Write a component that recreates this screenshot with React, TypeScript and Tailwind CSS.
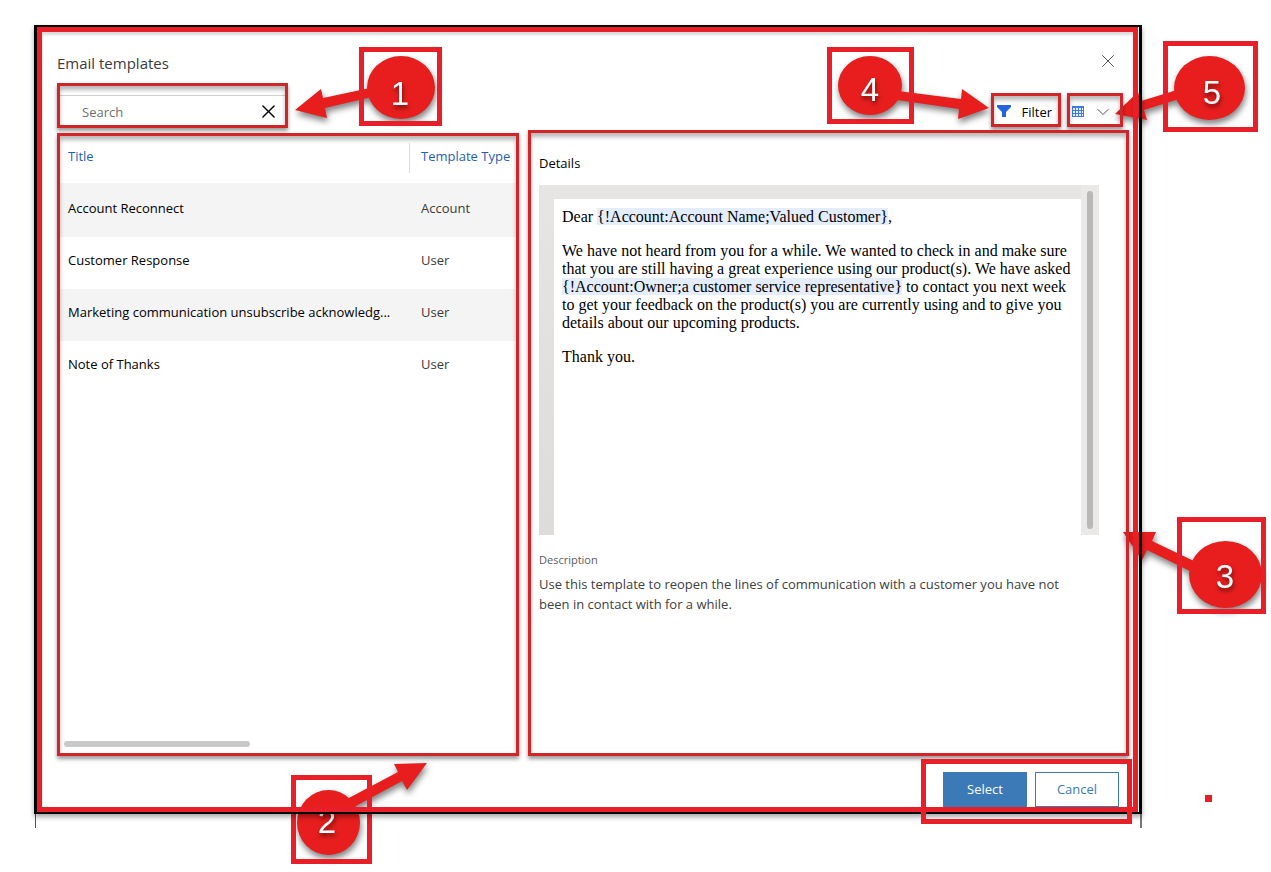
import React, { useState } from 'react';
import { ChevronDown, X } from 'lucide-react';

type Template = {
  title: string;
  type: string;
};

type CalloutProps = {
  label: string;
  frame: [number, number, number, number];
  circle: [number, number, number, number];
  arrow: string;
  text: [number, number];
};

const templates: Template[] = [
  { title: 'Account Reconnect', type: 'Account' },
  { title: 'Customer Response', type: 'User' },
  { title: 'Marketing communication unsubscribe acknowledg...', type: 'User' },
  { title: 'Note of Thanks', type: 'User' },
];

// numbered red bubble with its box and arrow
function Callout({ label, frame, circle, arrow, text }: CalloutProps) {
  const [x, y, w, h] = frame;
  const [cx, cy, rx, ry] = circle;

  return (
    <g>
      <g className="drop-shadow-[1px_4px_3px_rgba(0,0,0,0.5)]">
        <polygon points={arrow} fill="#e81e1e" />
        <ellipse cx={cx} cy={cy} rx={rx} ry={ry} fill="#e81e1e" />
      </g>
      <rect x={x + 2.5} y={y + 2.5} width={w - 5} height={h - 5} fill="none" stroke="#e81e28" strokeWidth="5" />
      <text
        x={text[0]}
        y={text[1]}
        textAnchor="middle"
        fill="#fff"
        className="font-['Liberation_Sans',sans-serif] text-[33px] drop-shadow-[1px_3px_2px_rgba(0,0,0,0.5)]"
      >
        {label}
      </text>
    </g>
  );
}

// thin red outline drawn over a part of the dialog
function Highlight() {
  return (
    <span className="pointer-events-none absolute inset-0 border-3 border-[#d3242a] shadow-[0_3px_4px_rgba(0,0,0,0.4),inset_0_4px_4px_rgba(0,0,0,0.28)]" />
  );
}

function GridIcon() {
  return (
    <svg width="12" height="11" viewBox="0 0 12 11" shapeRendering="crispEdges">
      <rect width="12" height="11" fill="#3f7ce0" />
      <path
        fill="#e6effd"
        d="M1 2h2v2H1zM4 2h2v2H4zM7 2h2v2H7zM10 2h1v2h-1zM1 5h2v2H1zM4 5h2v2H4zM7 5h2v2H7zM10 5h1v2h-1zM1 8h2v2H1zM4 8h2v2H4zM7 8h2v2H7zM10 8h1v2h-1z"
      />
    </svg>
  );
}

function TemplateList() {
  return (
    <section className="relative mt-[3px] flex min-w-0 flex-col justify-between p-[3px]">
      <table className="w-full table-fixed text-left text-[13px]">
        <thead>
          <tr className="h-[47px] align-top text-[#1f5fae]">
            <th className="w-[349px] px-2 pt-[10px] font-normal leading-5">Title</th>
            <th className="pt-[7px] font-normal">
              <div className="h-[30px] whitespace-nowrap border-l border-[#dcdcdc] pl-[11px] pt-[3px] leading-5">
                Template Type
              </div>
            </th>
          </tr>
          <tr className="h-0.5 bg-[#f4f4f4]">
            <td colSpan={2} />
          </tr>
        </thead>
        <tbody>
          {templates.map((template) => (
            <tr key={template.title} className="h-[52px] odd:bg-[#f4f4f4] align-top leading-5">
              <td className="truncate px-2 pt-[13px] font-medium text-black">{template.title}</td>
              <td className="pl-3 pt-[13px] text-[#3b3b3b]">{template.type}</td>
            </tr>
          ))}
        </tbody>
      </table>
      <div className="mb-[6px] ml-1 h-[6px] w-[186px] rounded-full bg-[#c9c9c9]" />
      <Highlight />
    </section>
  );
}

function TemplateDetails() {
  return (
    <section className="relative py-[3px] pl-[11px] pr-[30px]">
      <h2 className="h-[52px] pt-5 text-[13px] font-medium leading-5 text-black">Details</h2>
      <div className="flex h-[350px] bg-linear-to-b from-[#e6e5e4] to-[#dddcdb] pl-[15px]">
        <div className="mt-[14px] flex-1 bg-white px-2 pt-[9px] font-['Liberation_Serif',serif] text-[16px] leading-[18px] text-black">
          <p className="mb-4">
            Dear <span className="bg-[#e4edfc]">{'{!Account:Account Name;Valued Customer}'}</span>,
          </p>
          <p className="mb-4">
            We have not heard from you for a while. We wanted to check in and make sure that you are still having a
            great experience using our product(s). We have asked{' '}
            <span className="bg-[#e4edfc]">{'{!Account:Owner;a customer service representative}'}</span> to contact you
            next week to get your feedback on the product(s) you are currently using and to give you details about our
            upcoming products.
          </p>
          <p>Thank you.</p>
        </div>
        <div className="w-[18px] bg-[#eae9e8] px-[6px] py-[6px]">
          <div className="h-full rounded-full bg-[#b9b8b7]" />
        </div>
      </div>
      <h3 className="mt-4 text-[11px] leading-[18px] text-[#5c5c5c]">Description</h3>
      <p className="mt-[5px] pr-4 text-[13px] leading-5 text-[#404040]">
        Use this template to reopen the lines of communication with a customer you have not been in contact with for a
        while.
      </p>
      <Highlight />
    </section>
  );
}

export default function App() {
  const [search, setSearch] = useState('');

  return (
    <main className="relative min-h-screen overflow-hidden bg-white pb-11 pl-[34px] pr-[129px] pt-[25px] font-['Open_Sans',sans-serif]">
      {/* callouts sit under the dialog outline */}
      <svg className="absolute left-0 top-0" width="460" height="872" viewBox="0 0 460 872">
        <Callout
          label="1"
          frame={[359, 47, 83, 79]}
          circle={[401, 87.5, 34, 31.5]}
          arrow="295,110 321,89 323,98 370,88 372,97 325,108 327,118"
          text={[400, 105]}
        />
        <Callout
          label="2"
          frame={[291, 775, 81, 89]}
          circle={[328.5, 822.5, 31.5, 32.5]}
          arrow="427,763 394,764 398,772 345,800 352,808 402,781 407,790"
          text={[327, 833]}
        />
      </svg>
      <svg className="absolute right-0 top-0" width="471" height="872" viewBox="800 0 471 872">
        <Callout
          label="3"
          frame={[1177, 517, 89, 97]}
          circle={[1225.5, 574.5, 36.5, 33.5]}
          arrow="1123,532 1156,532 1152,541 1196,562 1192,572 1147,550 1142,560"
          text={[1225, 588]}
        />
        <Callout
          label="4"
          frame={[827, 47, 87, 77]}
          circle={[870, 85.5, 32, 29.5]}
          arrow="989,108 962,89 961,99 898,91 897,100 959,109 958,119"
          text={[870, 101]}
        />
        <Callout
          label="5"
          frame={[1163, 41, 95, 91]}
          circle={[1209.5, 88, 35.5, 32]}
          arrow="1115,114 1138,92 1141,101 1177,90 1179,99 1144,110 1147,120"
          text={[1212, 104]}
        />
        <rect x="1205" y="795" width="7" height="7" fill="#e81e28" />
      </svg>

      <div className="relative border-x-3 border-y-2 border-black pr-px shadow-[0_3px_5px_rgba(0,0,0,0.35)]">
        <div className="border-5 border-[#e81e28] pl-[15px] pr-1 shadow-[inset_0_3px_3px_rgba(0,0,0,0.15)]">
          <header className="flex h-[51px] items-start justify-between pr-[15px] pt-[19px]">
            <h1 className="text-[15px] leading-6 text-[#3b3b3b]">Email templates</h1>
            <button aria-label="Close" className="pt-1 text-[#444]">
              <X size={12} strokeWidth={1} viewBox="5.5 5.5 13 13" />
            </button>
          </header>

          <div className="flex h-[45px] items-end justify-between">
            <div className="relative flex h-full w-[231px] items-end p-[3px]">
              <label className="flex h-[30px] w-full items-center border-t border-[#cfcfcf] pl-[22px] pr-[10px] pt-0.5">
                <input
                  type="text"
                  aria-label="Search"
                  placeholder="Search"
                  value={search}
                  onChange={(e) => setSearch(e.target.value)}
                  className="w-full min-w-0 flex-1 bg-transparent text-[13px] leading-5 outline-none placeholder:text-[#6e6e6e]"
                />
                <button aria-label="Clear search" onClick={() => setSearch('')} className="text-black">
                  <X size={13} strokeWidth={1.5} viewBox="5 5 14 14" />
                </button>
              </label>
              <Highlight />
            </div>

            <div className="flex gap-[6px] pb-px pr-[6px]">
              <button className="relative flex h-[34px] w-[70px] items-center justify-between px-[6px] text-[13px] text-black">
                <svg width="14" height="12" viewBox="0 0 14 12" className="mt-0.5" fill="#2366dc">
                  <path d="M0 0h14v2L9 7v5H5V7L0 2z" />
                </svg>
                <span className="pr-[3px] pt-1 leading-5">Filter</span>
                <Highlight />
              </button>
              <button aria-label="Change view" className="relative flex h-[34px] w-14 items-center gap-[13px] pl-[5px] pt-0.5">
                <GridIcon />
                <ChevronDown size={12} strokeWidth={1} viewBox="5 6 14 12" className="mt-0.5 text-[#333]" />
                <Highlight />
              </button>
            </div>
          </div>

          <div className="mt-0.5 grid min-h-[626px] grid-cols-[462fr_601fr] gap-[9px]">
            <TemplateList />
            <TemplateDetails />
          </div>

          <footer className="flex justify-end pr-[10px] pt-4">
            <div className="relative flex gap-2 text-[13px]">
              <button className="h-[35px] w-[84px] bg-[#3b79b7] font-medium text-white">Select</button>
              <button className="h-[35px] w-[84px] border border-[#3b79b7] text-[#3b79b7]">Cancel</button>
              <span className="pointer-events-none absolute -bottom-[17px] -left-[22px] -right-[13px] -top-[13px] border-5 border-[#e81e28]" />
            </div>
          </footer>
        </div>
      </div>

      {/* stubs left under both lower corners */}
      <div className="flex h-[14px] justify-between pl-px">
        <span className="w-px bg-[#555]" />
        <span className="w-0.5 bg-[#777]" />
      </div>
    </main>
  );
}
